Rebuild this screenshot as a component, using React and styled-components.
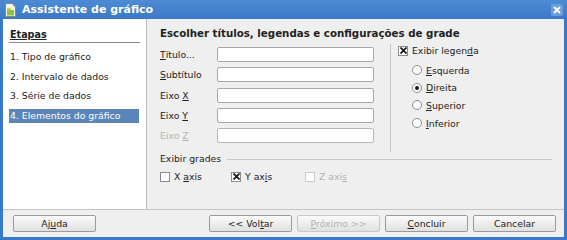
import React from 'react'
import styled, { createGlobalStyle } from 'styled-components'

const Global = createGlobalStyle`
  html, body { margin: 0; padding: 0; background: #ffffff; }
  body { font-family: "DejaVu Sans", "Liberation Sans", sans-serif; }
`

const steps = ['1. Tipo de gráfico', '2. Intervalo de dados', '3. Série de dados', '4. Elementos do gráfico']

const fields = [
  { label: <><u>T</u>ítulo...</> },
  { label: <><u>S</u>ubtítulo</> },
  { label: <>Eixo <u>X</u></> },
  { label: <>Eixo <u>Y</u></> },
  { label: <>Eixo <u>Z</u></>, disabled: true },
]

const positions = [
  { label: <><u>E</u>squerda</> },
  { label: <><u>D</u>ireita</>, checked: true },
  { label: <><u>S</u>uperior</> },
  { label: <><u>I</u>nferior</> },
]

const CheckMark = () => (
  <svg width="7" height="7" viewBox="0 0 7 7">
    <path d="M0.5 0.5 L6.5 6.5 M6.5 0.5 L0.5 6.5" stroke="#1a1a1a" strokeWidth="1.8" />
  </svg>
)

const AppIcon = () => (
  <svg width="11" height="14" viewBox="0 0 11 14">
    <path d="M0.5 0.5 H7 L10.5 4 V13.5 H0.5 Z" fill="#f4f4ee" stroke="#8a8a7a" />
    <rect x="2" y="7" width="7" height="5.5" fill="#8cc43c" />
    <rect x="2" y="5" width="4" height="2" fill="#c8d84a" />
  </svg>
)

const Check = ({ checked, disabled, width, children }) => (
  <CheckRow $disabled={disabled} $width={width}>
    <Box $disabled={disabled}>{checked && <CheckMark />}</Box>
    <span>{children}</span>
  </CheckRow>
)

const Radio = ({ checked, children }) => (
  <CheckRow>
    <Circle>{checked && <Dot />}</Circle>
    <span>{children}</span>
  </CheckRow>
)

const App = () => {
  return (
    <Window>
      <Global />
      <TitleBar>
        <AppIcon />
        <TitleText>Assistente de gráfico</TitleText>
        <Close>
          <svg width="8" height="8" viewBox="0 0 8 8">
            <path d="M1 1 L7 7 M7 1 L1 7" stroke="#ffffff" strokeWidth="2" />
          </svg>
        </Close>
      </TitleBar>
      <Frame>
        <Main>
          <Sidebar>
            <StepsTitle>Etapas</StepsTitle>
            <Steps>
              {steps.map((s, i) => (
                <Step key={s} $active={i === 3}>{s}</Step>
              ))}
            </Steps>
          </Sidebar>
          <Content>
            <Heading>Escolher títulos, legendas e configurações de grade</Heading>
            <Upper>
              <Form>
                {fields.map((f, i) => (
                  <React.Fragment key={i}>
                    <Label $disabled={f.disabled}>{f.label}</Label>
                    <Input disabled={f.disabled} />
                  </React.Fragment>
                ))}
              </Form>
              <Legend>
                <Check checked>Exibir legen<u>d</u>a</Check>
                <Radios>
                  {positions.map((p, i) => (
                    <Radio key={i} checked={p.checked}>{p.label}</Radio>
                  ))}
                </Radios>
              </Legend>
            </Upper>
            <Grades>
              <GradesHead>
                <span>Exibir grades</span>
                <Rule />
              </GradesHead>
              <Axes>
                <Check width={71}>X <u>a</u>xis</Check>
                <Check width={74} checked>Y ax<u>i</u>s</Check>
                <Check disabled>Z axi<u>s</u></Check>
              </Axes>
            </Grades>
          </Content>
        </Main>
        <Footer>
          <Button>Aj<u>u</u>da</Button>
          <Spacer />
          <Button>&lt;&lt; Vol<u>t</u>ar</Button>
          <Button disabled><u>P</u>róximo &gt;&gt;</Button>
          <Button><u>C</u>oncluir</Button>
          <Button>Cancelar</Button>
        </Footer>
      </Frame>
    </Window>
  )
}

export default App

const Window = styled.div`
  width: 567px;
  height: 240px;
  background: #3a79c6;
  display: flex;
  flex-direction: column;
  box-sizing: border-box;
  padding: 0 3px 3px 3px;
  font-size: 9.3px;
  color: #222222;
`

const TitleBar = styled.div`
  height: 19px;
  display: flex;
  align-items: center;
  background: linear-gradient(#4d8bd4, #3a79c6);
  margin: 0 -3px;
  padding: 0 4px 0 5px;
`

const TitleText = styled.div`
  color: #ffffff;
  font-weight: bold;
  font-size: 11px;
  margin-left: 6px;
  flex: 1;
`

const Close = styled.div`
  width: 12px;
  height: 12px;
  display: flex;
  align-items: center;
  justify-content: center;
  background: #6a9ddb;
  border-radius: 2px;
`

const Frame = styled.div`
  flex: 1;
  background: #efefef;
  display: flex;
  flex-direction: column;
  min-height: 0;
`

const Main = styled.div`
  flex: 1;
  display: flex;
  min-height: 0;
  border-bottom: 1px solid #c4c4c4;
`

const Sidebar = styled.div`
  width: 144px;
  background: #ffffff;
  border-right: 1px solid #b8b8b8;
  padding: 10px 4px 0 6px;
  box-sizing: border-box;
`

const StepsTitle = styled.div`
  font-weight: bold;
  font-size: 9.6px;
  line-height: 12px;
  text-decoration: underline;
  padding: 0 0 1px 1px;
  border-bottom: 1px solid #8a8a8a;
  margin-right: 2px;
`

const Steps = styled.div`
  display: flex;
  flex-direction: column;
  gap: 5.7px;
  margin-top: 7px;
`

const Step = styled.div`
  height: 14px;
  line-height: 14px;
  padding-left: 1px;
  width: 129px;
  white-space: nowrap;
  background: ${p => (p.$active ? '#5b85b8' : 'transparent')};
  color: ${p => (p.$active ? '#ffffff' : '#222222')};
`

const Content = styled.div`
  flex: 1;
  padding: 8px 12px 0 13px;
  display: flex;
  flex-direction: column;
`

const Heading = styled.div`
  font-weight: bold;
  font-size: 10.25px;
  line-height: 13px;
  height: 13px;
  white-space: nowrap;
`

const Upper = styled.div`
  display: flex;
  margin-top: 4px;
`

const Form = styled.div`
  display: grid;
  grid-template-columns: 57px 157px;
  grid-auto-rows: 15px;
  row-gap: 5.3px;
  align-items: center;
  padding: 3px 16px 9px 0;
  border-right: 1px solid #c8c8c8;
`

const Label = styled.div`
  color: ${p => (p.$disabled ? '#b4b4b4' : '#222222')};
`

const Input = styled.input`
  box-sizing: border-box;
  height: 15px;
  width: 157px;
  margin: 0;
  border: 1px solid #a8a8a8;
  border-radius: 2px;
  background: #ffffff;
  &:disabled { background: #ffffff; border-color: #b8b8b8; }
`

const Legend = styled.div`
  padding-left: 7px;
`

const Radios = styled.div`
  display: flex;
  flex-direction: column;
  gap: 4.7px;
  margin-top: 6.5px;
  margin-left: 14px;
`

const CheckRow = styled.label`
  display: flex;
  align-items: center;
  gap: 4px;
  height: 13px;
  width: ${p => (p.$width ? `${p.$width}px` : 'auto')};
  color: ${p => (p.$disabled ? '#b4b4b4' : '#222222')};
`

const Box = styled.span`
  width: 10px;
  height: 10px;
  box-sizing: border-box;
  border: 1px solid ${p => (p.$disabled ? '#cccccc' : '#8c8c8c')};
  background: #ffffff;
  display: flex;
  align-items: center;
  justify-content: center;
`

const Circle = styled.span`
  width: 10px;
  height: 10px;
  box-sizing: border-box;
  border-radius: 50%;
  border: 1px solid #8c8c8c;
  background: #ffffff;
  display: flex;
  align-items: center;
  justify-content: center;
`

const Dot = styled.span`
  width: 4px;
  height: 4px;
  border-radius: 50%;
  background: #1a1a1a;
`

const Grades = styled.div`
  margin-top: 0;
`

const GradesHead = styled.div`
  display: flex;
  align-items: center;
  gap: 6px;
  height: 13px;
`

const Rule = styled.div`
  flex: 1;
  height: 1px;
  margin-top: 1px;
  background: #c8c8c8;
`

const Axes = styled.div`
  display: flex;
  margin-top: 5px;
`

const Footer = styled.div`
  height: 27px;
  display: flex;
  align-items: center;
  gap: 5px;
  padding: 0 8px 0 10px;
`

const Spacer = styled.div`
  flex: 1;
`

const Button = styled.button`
  width: 83px;
  height: 17px;
  margin: 0;
  padding: 0;
  font-family: inherit;
  font-size: 9.3px;
  color: ${p => (p.disabled ? '#b4b4b4' : '#222222')};
  border: 1px solid ${p => (p.disabled ? '#c8c8c8' : '#9a9a9a')};
  border-radius: 2px;
  background: linear-gradient(#fbfbfb, #e0e0e0);
`
